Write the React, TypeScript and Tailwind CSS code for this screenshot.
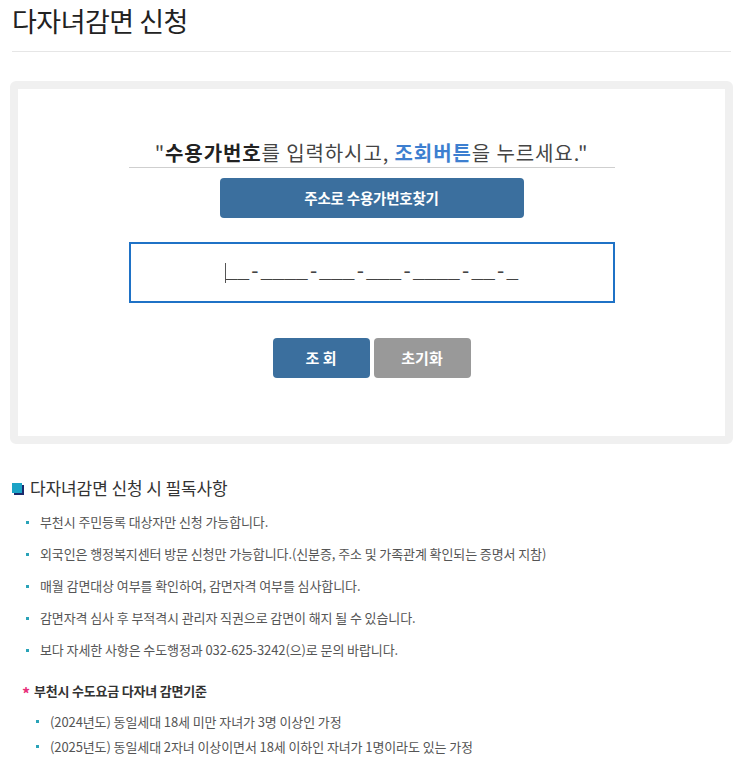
import React from 'react';

const FONT = { fontFamily: '"Noto Sans CJK KR", "Noto Sans", sans-serif' };

const NOTICES = [
  '부천시 주민등록 대상자만 신청 가능합니다.',
  '외국인은 행정복지센터 방문 신청만 가능합니다.(신분증, 주소 및 가족관계 확인되는 증명서 지참)',
  '매월 감면대상 여부를 확인하여, 감면자격 여부를 심사합니다.',
  '감면자격 심사 후 부적격시 관리자 직권으로 감면이 해지 될 수 있습니다.',
  '보다 자세한 사항은 수도행정과 032-625-3242(으)로 문의 바랍니다.',
];

const CRITERIA = [
  '(2024년도) 동일세대 18세 미만 자녀가 3명 이상인 가정',
  '(2025년도) 동일세대 2자녀 이상이면서 18세 이하인 자녀가 1명이라도 있는 가정',
];

// small teal square bullet
const Dot = () => <span className="w-[3px] h-[3px] bg-[#2aa3b8] shrink-0" />;

export default function App() {
  return (
    <div className="w-[743px] min-h-[761px] bg-white text-[#555]" style={FONT}>
      {/* Page title */}
      <div className="mx-3 h-[52px] border-b border-[#e6e6e6]">
        <h1 className="text-[27px] leading-[42px] font-normal text-[#222] tracking-[-0.5px]">다자녀감면 신청</h1>
      </div>

      {/* Search box */}
      <div className="mt-[29px] mx-[10px] border-8 border-[#f0f0f0] rounded-md bg-white">
        <div className="flex flex-col items-center pt-[50px] pb-[58px]">
          <div className="w-[486px] h-[29px] border-b border-[#cfcfcf] text-center text-[20px] leading-[28px] font-normal text-[#444] tracking-[0.9px]">
            "<span className="font-bold text-[#222]">수용가번호</span>를 입력하시고, <span className="font-bold text-[#3d7fd0]">조회버튼</span>을 누르세요."
          </div>
          <button className="mt-[10px] w-[304px] h-10 rounded bg-[#3b6f9e] text-white text-[14.5px] font-bold tracking-[-0.2px]">
            주소로 수용가번호찾기
          </button>
          <div className="mt-6 w-[486px] h-[61px] border-2 border-[#1f72c6] flex items-center justify-center">
            <div className="flex items-end text-[19.5px] leading-[24px] text-[#444]" style={{ fontFamily: '"Liberation Mono", monospace' }}>
              <span className="w-px h-[20px] bg-[#555] mb-[2px]" />
              <span>__-____-___-___-____-__-_</span>
            </div>
          </div>
          <div className="mt-[35px] flex gap-1">
            <button className="w-[97px] h-10 rounded bg-[#3b6f9e] text-white text-[15px] font-bold">조 회</button>
            <button className="w-[97px] h-10 rounded bg-[#999999] text-white text-[15px] font-bold">초기화</button>
          </div>
        </div>
      </div>

      {/* Notices */}
      <div className="mt-8 px-3">
        <h2 className="flex items-center h-6 text-[17px] font-normal text-[#333] tracking-[-0.1px]">
          <span className="relative w-[11px] h-[11px] mr-[7px] shrink-0">
            <span className="absolute left-[2px] top-[2px] w-[10px] h-[10px] bg-[#1c2a6b]" />
            <span className="absolute left-0 top-0 w-[10px] h-[10px] bg-[#1ba3c6]" />
          </span>
          다자녀감면 신청 시 필독사항
        </h2>
        <ul className="mt-[6px] pl-[14px]">
          {NOTICES.map((text) => (
            <li key={text} className="flex items-center gap-[11px] h-8 text-[13px] tracking-[-0.1px]">
              <Dot />
              <span>{text}</span>
            </li>
          ))}
        </ul>

        <div className="mt-[15px] pl-[10px] flex items-center h-5 text-[13px] font-bold text-[#333] tracking-[-0.2px]">
          <span className="text-[#e8307a] text-[16px] leading-none mr-[4px] mt-[3px]">*</span>
          부천시 수도요금 다자녀 감면기준
        </div>
        <ul className="mt-2 pl-[24px]">
          {CRITERIA.map((text) => (
            <li key={text} className="flex items-center gap-[11px] h-[25px] text-[13px] tracking-[-0.1px]">
              <Dot />
              <span>{text}</span>
            </li>
          ))}
        </ul>
      </div>
    </div>
  );
}
